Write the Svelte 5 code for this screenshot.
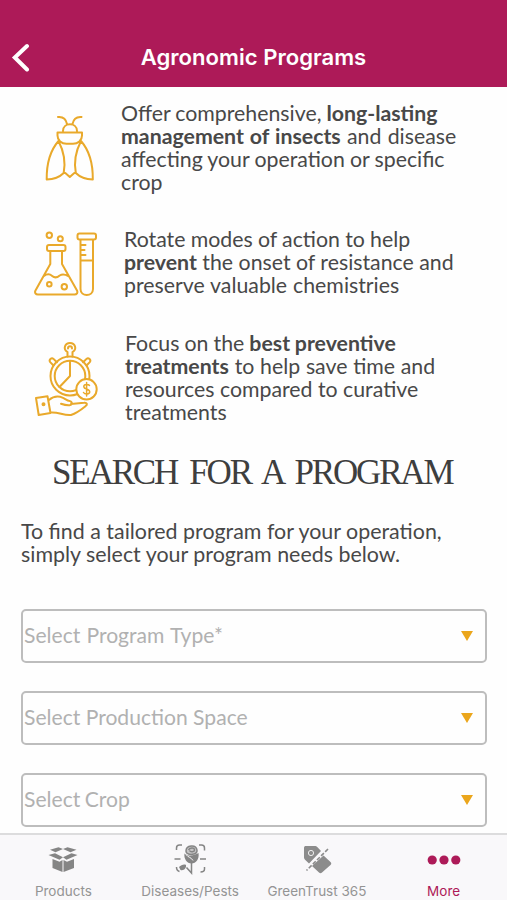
<script>
  // Each line: word spacing in px and its runs (text, bold flag).
  const benefits = [
    {
      icon: 'moth',
      lines: [
        { ws: -0.5, runs: [['Offer comprehensive, '], ['long-lasting', true]] },
        { ws: 0.8, runs: [['management of insects', true], [' and disease']] },
        { ws: -0.3, runs: [['affecting your operation or specific']] },
        { ws: 0, runs: [['crop']] }
      ]
    },
    {
      icon: 'lab',
      lines: [
        { ws: -0.2, runs: [['Rotate modes of action to help']] },
        { ws: 0, runs: [['prevent', true], [' the onset of resistance and']] },
        { ws: 0.5, runs: [['preserve valuable chemistries']] }
      ]
    },
    {
      icon: 'watch',
      lines: [
        { ws: -0.4, runs: [['Focus on the '], ['best preventive', true]] },
        { ws: 0.3, runs: [['treatments', true], [' to help save time and']] },
        { ws: 0, runs: [['resources compared to curative']] },
        { ws: 0, runs: [['treatments']] }
      ]
    }
  ];
  const intro = [
    { ws: 0, text: 'To find a tailored program for your operation,' },
    { ws: 0, text: 'simply select your program needs below.' }
  ];
  const fields = [
    { ws: 0.8, text: 'Select Program Type*' },
    { ws: 0, text: 'Select Production Space' },
    { ws: -1, text: 'Select Crop' }
  ];
</script>

<div class="screen">
  <header>
    <button class="back" aria-label="Back">
      <svg width="20" height="30" viewBox="0 0 20 30"><path d="M17 4 4.800 15.500 17 27.500" fill="none" stroke="#fff" stroke-width="4" stroke-linecap="round" stroke-linejoin="miter" /></svg>
    </button>
    <h1>Agronomic Programs</h1>
  </header>

  <main>
    {#each benefits as b}
      <section class="benefit {b.icon}">
        <div class="art">
          {#if b.icon === 'moth'}
            <svg width="80" height="100" viewBox="0 0 80 100">
              <path d="M28 17c5-.5 8 2 9 7M51.500 17c-5-.5-8 2-9 7M33 31c0-9 14-9 14 0M27.500 32.500h24.500v3c0 5-4 8.300-9 8.300h-6.500c-5 0-9-3.300-9-8.300zM28.500 41c-7 8-12 22-11.800 38.500 7-.2 13-2.500 17-6.500 1.500-8 1-20-5.200-32M51 41c7 8 12 22 11.800 38.500-7-.2-13-2.500-17-6.500-1.500-8-1-20 5.200-32M33.700 73h1.600l4.500 4 4.500-4h1.500" />
            </svg>
          {:else if b.icon === 'lab'}
            <svg width="85" height="85" viewBox="0 0 85 85">
              <circle cx="24.300" cy="15.300" r="2.700" /><circle cx="35.300" cy="18.700" r="2.500" />
              <rect x="22" y="25" width="18.500" height="6" rx="2" />
              <path d="M25.300 31v13L10.500 70.500c-1.200 2.300.2 4 2.500 4h36.500c2.300 0 3.500-1.700 2.500-4L37 44V31M19 56c3-2.300 6-2 8.200 0 2.600 2.300 5.400 1.300 7.500-.5 2.500-1.500 5-1.300 8.600.5" />
              <circle cx="24.300" cy="64.300" r="2.300" /><circle cx="39.300" cy="66.700" r="2.700" />
              <rect x="52.500" y="13.500" width="18.500" height="6" rx="2" />
              <path d="M55.500 20v49c0 8 12.500 8 12.500 0V20M55.500 40.500H68M56 25h4.500M56 30h3.500M56 35h4.500" />
            </svg>
          {:else}
            <svg width="85" height="90" viewBox="0 0 85 90">
              <circle cx="45" cy="41" r="19.500" /><circle cx="45" cy="41" r="15.300" />
              <path d="M45 26v15L34.500 52M42.500 21.500v-4.500c-5-3-2.500-9 2.500-9s7.500 6 2.500 9v4.500M43 13.500c0-3 4-3 4 0" />
              <path d="M28.500 30.500l-3.300-3.400c-1.700-2.200 1.300-5 3.300-3.200l3.400 3.400M61.500 30.500l3.300-3.400c1.700-2.200-1.300-5-3.300-3.200l-3.400 3.400" />
              <circle cx="61.500" cy="54.300" r="10.200" fill="#fff" />
              <path class="thin" d="M64.500 50.500c-1-1.500-6-1.600-5.700 1.300.3 2.800 5.800 1.700 5.900 5 .1 2.800-5 2.800-6.200.7M61.600 47.500v13.500" />
              <path d="M11 63l11.500-1.800L25.500 78l-11.800 2zM24 65c3.500-3 8.500-4.500 14-2.200 2.500 1.200 4 2.600 7 3.300 2.500.8 2.200 4-.5 4.200-2.500.2-6-.6-8.500-1.500M46 69l13-1.300c3-.4 4 1.800 1.500 3.500-5 4-10 7.300-14.500 8.800-7 1-13-3.500-20.500-2.500" />
              <circle cx="18.500" cy="69.300" r="1" />
            </svg>
          {/if}
        </div>
        <div class="copy">
          {#each b.lines as line}
            <div class="line" style="word-spacing:{line.ws}px">
              {#each line.runs as run}{#if run[1]}<b>{run[0]}</b>{:else}<span>{run[0]}</span>{/if}{/each}
            </div>
          {/each}
        </div>
      </section>
    {/each}

    <h2>SEARCH FOR A PROGRAM</h2>

    <div class="intro">
      {#each intro as l}<div class="line" style="word-spacing:{l.ws}px">{l.text}</div>{/each}
    </div>

    <div class="fields">
      {#each fields as f}
        <div class="field">
          <span style="word-spacing:{f.ws}px">{f.text}</span>
          <svg width="12" height="10" viewBox="0 0 12 10"><path d="M0 0h12L6 10z" fill="#eba61c" /></svg>
        </div>
      {/each}
    </div>
  </main>

  <nav>
    <div class="tab">
      <svg width="32" height="32" viewBox="0 0 32 32" fill="#858585">
        <path d="M11.500 3.200 16 5l-7.500 3.300L3 5.800zM20.500 3.200 16 5l7.500 3.300L29.500 5.800zM8 9.200l8 4-3.500 2.500L1.500 11zM24.500 9.200l-8.500 4 3.500 2.500L30.500 11zM5.500 15l7 2.800 3-1.800v12L5.500 24zM27 15l-7 2.800-3.500-1.800v12L27 24z" />
      </svg>
      <span>Products</span>
    </div>
    <div class="tab">
      <svg width="32" height="32" viewBox="0 0 32 32" fill="none" stroke="#858585" stroke-width="1.500">
        <path d="M2.500 6V4c0-2 1-3 3-3H8M25 1h2.500c2 0 3 1 3 3v2.500M30.500 23v2c0 2-1.500 3-4 3M2.500 23c0 3 1 4 3 4.500M.5 15h6M26 15h6" />
        <path d="M12 7c0-6 10-7 11-1 .2 2-1 3.500-3 4-4 1-8 0-8-3zM14.500 6c1-2.500 6-3 6 0 0 2-4 2.500-5 .5" fill="#858585" fill-opacity=".45" />
        <path d="M10.500 9.500c4 3 9 2.500 14-.5 1 6-2.500 10.500-7 10.500s-8-5-7-10z" fill="#858585" stroke="none" />
        <path d="M12 10.500c2 3 5 2.500 7 6" stroke="#f9f8fa" stroke-width="1" />
        <path d="M17.500 19v10l-5-5.500" />
        <path d="M5 23c2-2 5-3 7-2 .5 3-2 6-5.500 5z" fill="#858585" stroke="none" />
      </svg>
      <span>Diseases/Pests</span>
    </div>
    <div class="tab">
      <svg width="32" height="32" viewBox="0 0 32 32">
        <path d="M3 4c0-1.500.7-2 2-2h8.500c1.500 0 2.200.3 3 1.200L20 7 8 19.500 4.300 16C3.300 15 3 14.300 3 13zM22.500 11.500 29.500 18c1 1 1 2 0 3l-8.500 7.500c-1 1-2 1-3 0L11 22z" fill="#8c8c8c" />
        <circle cx="10" cy="9" r="2.600" fill="none" stroke="#eee" stroke-width="1" />
        <path d="M27 5 5.500 26.500" stroke="#8c8c8c" stroke-width="1.600" stroke-dasharray="4 1.800" />
      </svg>
      <span>GreenTrust 365</span>
    </div>
    <div class="tab active">
      <svg width="34" height="32" viewBox="0 0 34 32" fill="#ad1a58"><circle cx="5.200" cy="16" r="4.600" /><circle cx="17" cy="16" r="4.600" /><circle cx="28.800" cy="16" r="4.600" /></svg>
      <span>More</span>
    </div>
  </nav>
</div>

<style>
  :global(body) { margin: 0; background: #fff; }
  .screen { width: 507px; height: 900px; display: flex; flex-direction: column; overflow: hidden; background: #fefefe; font-family: Lato, 'Open Sans', sans-serif; color: #484848; }
  header { box-sizing: border-box; height: 87px; flex: none; background: #ad1a58; color: #fff; display: grid; grid-template-columns: 60px 1fr 60px; padding-top: 42px; align-items: start; }
  .back { border: 0; background: none; padding: 0 0 0 10px; height: 30px; display: flex; }
  h1 { margin: 0; font: 600 22.100px/31px Inter, sans-serif; text-align: center; white-space: nowrap; }
  main { flex: 1; min-height: 0; overflow: hidden; }
  .benefit { display: flex; }
  .art { flex: none; height: 0; }
  .art svg { display: block; fill: none; stroke: #e9a92b; stroke-width: 2; stroke-linecap: round; stroke-linejoin: round; }
  .art .thin { stroke-width: 1.500; }
  .moth { padding: 15px 0 0 30px; height: 112px; }
  .moth .art svg { margin-top: -2px; }
  .moth .copy { margin-left: 11px; }
  .lab { padding: 14px 0 0 25px; height: 89px; }
  .lab .art svg { margin-top: -8px; }
  .lab .copy { margin-left: 14px; }
  .watch { padding: 15px 0 0 25px; height: 102px; }
  .watch .art svg { margin-top: 3px; }
  .watch .copy { margin-left: 15px; }
  .line { font-size: 21.300px; line-height: 23px; height: 23px; white-space: pre; }
  b { font-weight: 700; }
  h2 { margin: 19px 0 0 52px; font: 400 35px/40px 'Liberation Serif', serif; letter-spacing: -2.150px; word-spacing: 5.500px; white-space: nowrap; color: #3e3e3e; }
  .intro { margin: 27px 0 0 21px; }
  .intro .line { font-size: 21.400px; }
  .fields { margin: 43px 20px 0 21px; display: flex; flex-direction: column; gap: 28px; }
  .field { box-sizing: border-box; height: 54px; border: 2px solid #bdbdbd; border-radius: 5px; display: flex; align-items: center; justify-content: space-between; padding: 0 12px 0 1px; font-size: 21.100px; color: #b1b1b1; white-space: nowrap; }
  .field span { line-height: 24px; margin-top: -3px; }
  nav { flex: none; box-sizing: border-box; height: 67px; border-top: 2px solid #dcdcdd; background: #f9f8fa; display: grid; grid-template-columns: repeat(4, 1fr); }
  .tab { display: flex; flex-direction: column; align-items: center; padding-top: 9px; color: #949494; font: 400 13.500px/16px Inter, sans-serif; white-space: nowrap; }
  .tab span { margin-top: 7px; }
  .tab.active { color: #ad1a58; }
</style>
